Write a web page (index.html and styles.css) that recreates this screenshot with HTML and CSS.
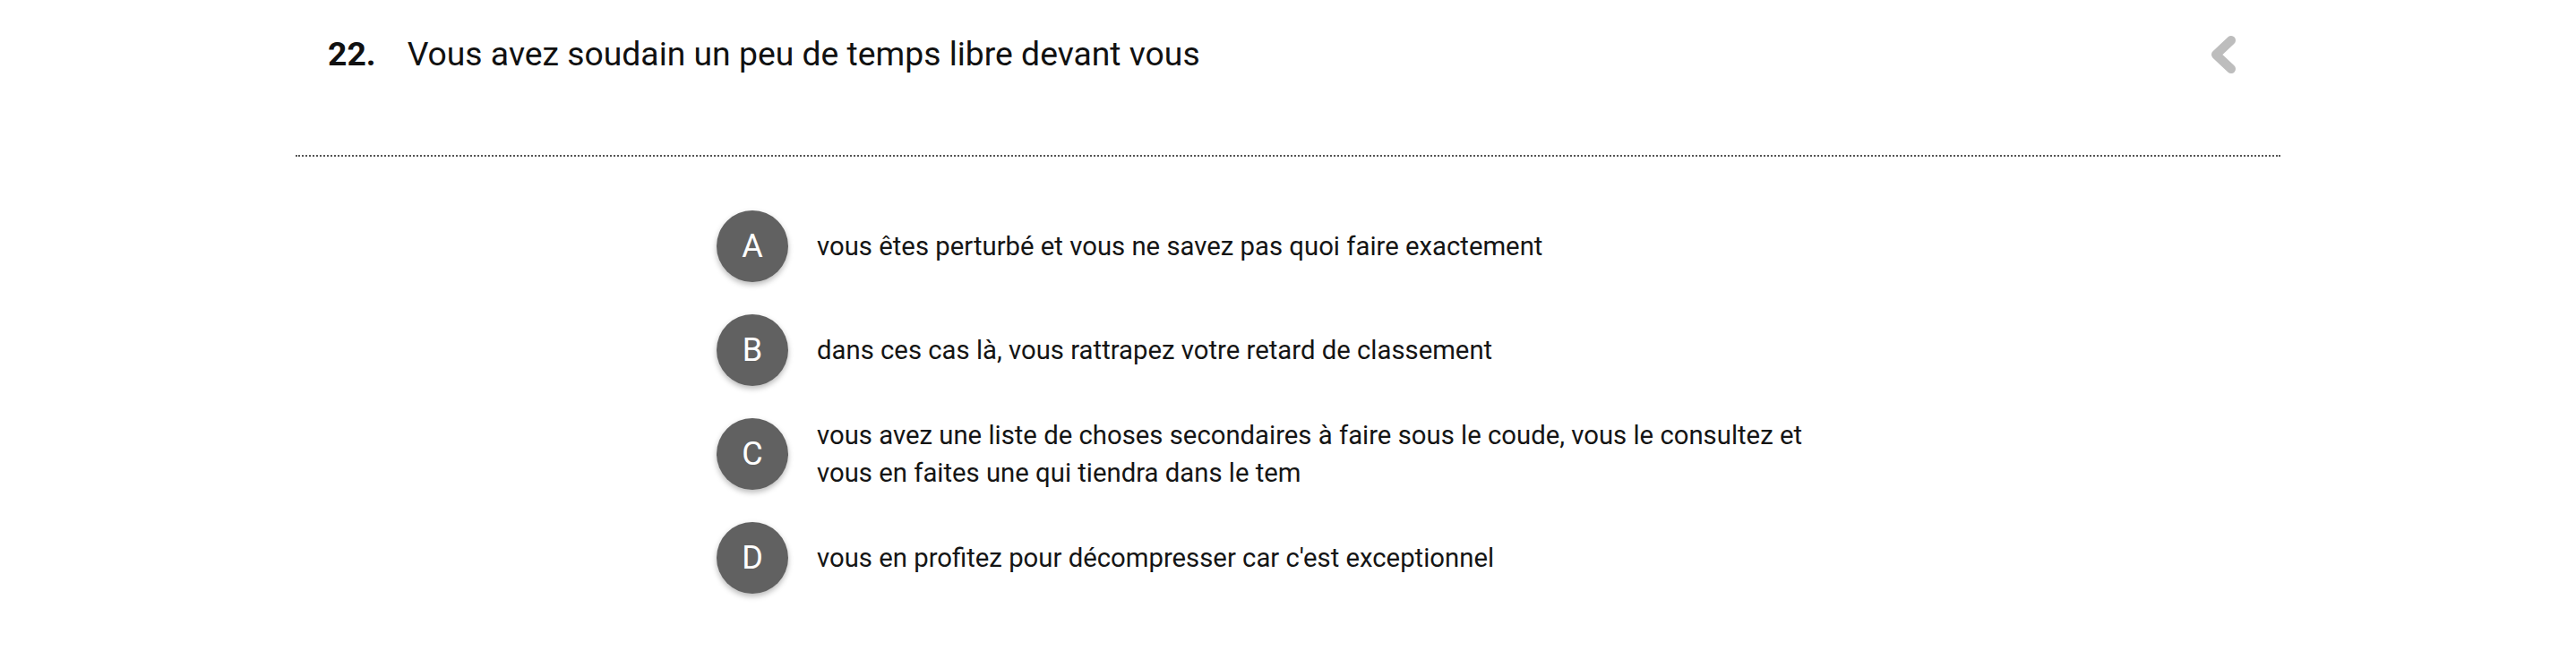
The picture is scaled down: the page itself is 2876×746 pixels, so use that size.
FILE: index.html
```html
<!DOCTYPE html>
<html lang="fr">
<head>
<meta charset="utf-8">
<title>Question 22</title>
<link rel="stylesheet" href="styles.css">
</head>
<body>
<main class="quiz">
  <header class="question">
    <div class="question-title">
      <span class="question-number">22.</span>
      <span class="question-text">Vous avez soudain un peu de temps libre devant vous</span>
    </div>
    <button class="back" type="button" aria-label="Retour">
      <svg width="30" height="44" viewBox="0 0 30 44"><polyline points="24,6 7,22 24,38" fill="none" stroke="#bdbdbd" stroke-width="10" stroke-linecap="round" stroke-linejoin="round"/></svg>
    </button>
  </header>
  <ul class="answers">
    <li class="answer"><span class="letter">A</span><span class="answer-text">vous êtes perturbé et vous ne savez pas quoi faire exactement</span></li>
    <li class="answer"><span class="letter">B</span><span class="answer-text">dans ces cas là, vous rattrapez votre retard de classement</span></li>
    <li class="answer"><span class="letter">C</span><span class="answer-text">vous avez une liste de choses secondaires à faire sous le coude, vous le consultez et vous en faites une qui tiendra dans le tem</span></li>
    <li class="answer"><span class="letter">D</span><span class="answer-text">vous en profitez pour décompresser car c'est exceptionnel</span></li>
  </ul>
</main>
</body>
</html>
```
FILE: styles.css
```css
html, body {
  margin: 0;
  padding: 0;
  background: #ffffff;
}
body {
  font-family: Roboto, "Liberation Sans", sans-serif;
  color: #111111;
}
.quiz {
  width: 2216px;
  margin: 0 auto;
}
.question {
  display: flex;
  align-items: center;
  justify-content: space-between;
  padding: 38px 49px 90px 36px;
  border-bottom: 2px dotted #555555;
}
.question-title {
  display: flex;
  align-items: baseline;
  font-size: 37.3px;
  line-height: 45px;
}
.question-number {
  font-weight: 700;
  margin-right: 35px;
}
.question-text {
  font-weight: 400;
}
.back {
  display: block;
  padding: 0;
  margin: 0;
  border: 0;
  background: transparent;
  width: 30px;
  height: 44px;
}
.back svg {
  display: block;
}
.answers {
  list-style: none;
  margin: 0;
  padding: 42px 0 0 470px;
}
.answer {
  display: flex;
  align-items: center;
  min-height: 116px;
}
.letter {
  flex: none;
  width: 80px;
  height: 80px;
  border-radius: 50%;
  background: #616161;
  color: #ffffff;
  font-size: 36px;
  font-weight: 400;
  display: flex;
  align-items: center;
  justify-content: center;
  box-shadow: 0 3px 6px rgba(0, 0, 0, 0.28);
  margin-right: 32px;
}
.answer-text {
  font-size: 29.3px;
  line-height: 42px;
  max-width: 1120px;
  color: #151515;
}
```
